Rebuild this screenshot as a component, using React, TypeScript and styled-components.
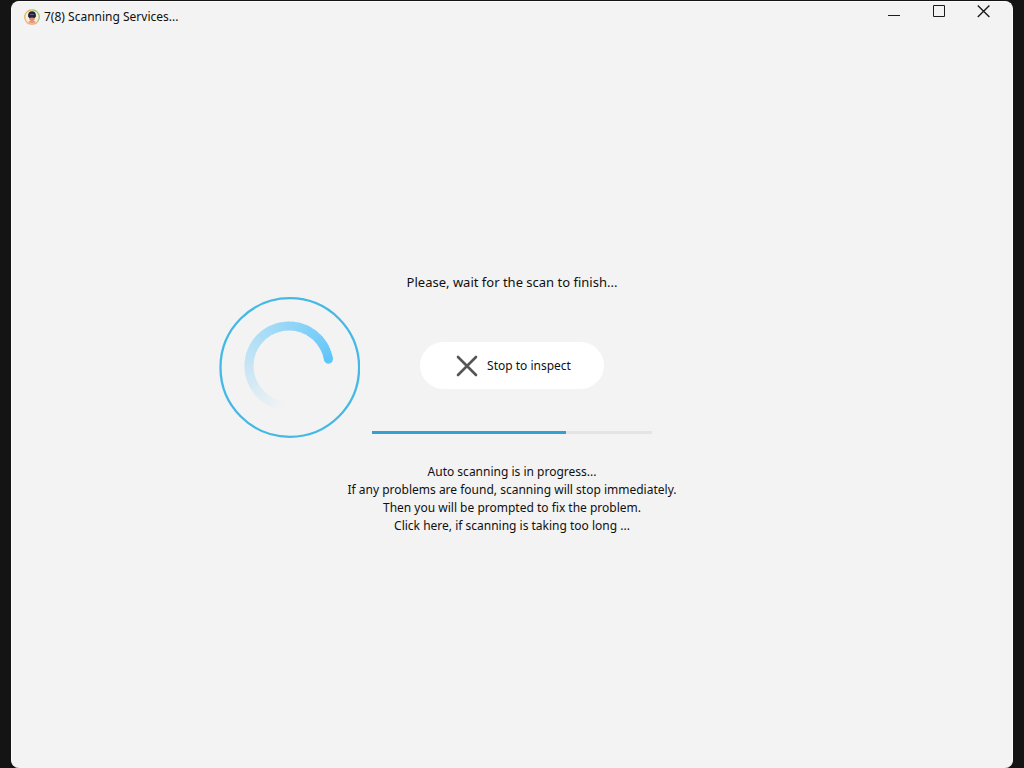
import React from "react";
import styled, { createGlobalStyle } from "styled-components";

const GlobalStyle = createGlobalStyle`
  * { box-sizing: border-box; }
  body {
    margin: 0;
    background: #141414;
    font-family: "Trebuchet MS", "Noto Sans", sans-serif;
    color: #101010;
  }
`;

const Desktop = styled.div`
  display: flex;
  min-height: 100vh;
  padding: 1px 11px 0;
`;

const Window = styled.div`
  flex: 1;
  display: flex;
  flex-direction: column;
  background: #f3f3f3;
  border: 1px solid #fbfbfb;
  border-bottom: 0;
  border-radius: 8px;
`;

const TitleBar = styled.header`
  display: flex;
  justify-content: space-between;
  align-items: flex-start;
  height: 31px;
  padding: 0 6px 0 12px;
`;

const Title = styled.h1`
  display: flex;
  align-items: center;
  gap: 4px;
  margin: 4px 0 0;
  font: 400 12px/20px "Noto Sans", sans-serif;
`;

const TitleText = styled.span`
  padding-top: 1px;
`;

const Controls = styled.div`
  display: flex;
`;

const ControlButton = styled.button`
  display: grid;
  place-items: center;
  width: 45px;
  height: 19px;
  padding: 0;
  border: 0;
  background: transparent;
  color: #1c1c1c;
`;

const Content = styled.main`
  display: grid;
  grid-template-columns: 141px 280px 141px;
  column-gap: 12px;
  justify-content: center;
  padding: 239px 0 40px;
`;

const Heading = styled.p`
  grid-column: 1 / -1;
  margin: 0 0 5px;
  font-size: 13px;
  line-height: 20px;
  text-align: center;
`;

const Actions = styled.div`
  grid-column: 2;
  display: flex;
  flex-direction: column;
  align-items: center;
  gap: 42px;
  padding-top: 45px;
`;

const StopButton = styled.button`
  display: flex;
  align-items: center;
  justify-content: center;
  gap: 9px;
  width: 184px;
  height: 47px;
  padding: 0 0 0 3px;
  border: 0;
  border-radius: 24px;
  background: #fff;
  color: #101010;
  font-family: inherit;
  font-size: 12px;
`;

const Progress = styled.progress`
  appearance: none;
  display: block;
  width: 100%;
  height: 3px;
  border: 0;
  background: #e4e4e4;

  &::-webkit-progress-bar { background: #e4e4e4; }
  &::-webkit-progress-value { background: #349fd3; }
`;

const Notes = styled.div`
  grid-column: 1 / -1;
  margin-top: 25px;
  font-size: 12px;
  line-height: 18px;
  text-align: center;
`;

const Note = styled.p`
  margin: 0;
`;

const NoteLink = styled.a`
  color: inherit;
  text-decoration: none;
`;

const STEPS = 56;
const START = -10;
const SWEEP = 252;

function point(deg: number) {
  const rad = (deg * Math.PI) / 180;
  return `${(70 + 40 * Math.cos(rad)).toFixed(2)} ${(69 + 40 * Math.sin(rad)).toFixed(2)}`;
}

function mix(t: number) {
  const head = [96, 198, 250];
  const tail = [243, 243, 243];
  return `rgb(${head.map((c, i) => Math.round(c + (tail[i] - c) * t)).join(",")})`;
}

function Spinner() {
  const segments = Array.from({ length: STEPS }, (_, i) => {
    const from = START - (i * SWEEP) / STEPS;
    const to = START - ((i + 1) * SWEEP) / STEPS;
    return { d: `M${point(from + 1)} A40 40 0 0 0 ${point(to)}`, color: mix(Math.pow(i / STEPS, 0.9)) };
  });
  return (
    <svg width="141" height="141" viewBox="0 0 141 141" fill="none" role="img" aria-label="Scanning">
      <circle cx="70.8" cy="70.5" r="69.3" stroke="#45b9e6" strokeWidth="2.3" />
      <path d={`M${point(START)} L${point(START + 0.2)}`} stroke={mix(0)} strokeWidth="9" strokeLinecap="round" />
      {segments.map((s) => (
        <path key={s.d} d={s.d} stroke={s.color} strokeWidth="9" />
      ))}
    </svg>
  );
}

function AppIcon() {
  return (
    <svg width="16" height="16" viewBox="0 0 16 16" aria-hidden="true">
      <circle cx="8" cy="8" r="7.2" fill="#f6eee0" />
      <path d="M8 .8A7.2 7.2 0 0 0 2.2 12.3" fill="none" stroke="#e2b458" strokeWidth="1.2" />
      <path d="M8 .8A7.2 7.2 0 0 1 13.8 12.3" fill="none" stroke="#9bc46b" strokeWidth="1.2" />
      <path d="M2.2 12.3A7.2 7.2 0 0 0 13.8 12.3" fill="none" stroke="#ecac85" strokeWidth="1.2" />
      <path d="M4.6 13.6q.4-2.6 3.4-2.6t3.4 2.6q-3.4 2-6.8 0Z" fill="#e89b7b" />
      <path d="M5 6h6v3q-.6 3-3 3T5 9Z" fill="#dc8a70" />
      <path d="M4 7.5Q3.8 2.3 8 2.3t4 5.2l-1.4 1.6-2.6-.6-2.6.6Z" fill="#252238" />
      <path d="M6 5.7q2-.8 4 0" fill="none" stroke="#77799a" strokeWidth=".8" />
    </svg>
  );
}

export default function App() {
  return (
    <>
      <GlobalStyle />
      <Desktop>
        <Window>
          <TitleBar>
            <Title>
              <AppIcon />
              <TitleText>7(8) Scanning Services...</TitleText>
            </Title>
            <Controls>
              <ControlButton aria-label="Minimize">
                <svg width="13" height="13" fill="none" stroke="currentColor">
                  <path d="M1 10.5h12" />
                </svg>
              </ControlButton>
              <ControlButton aria-label="Maximize">
                <svg width="13" height="13" fill="none" stroke="currentColor">
                  <path d="M1.5.5h11v11h-11Z" />
                </svg>
              </ControlButton>
              <ControlButton aria-label="Close">
                <svg width="13" height="13" fill="none" stroke="currentColor" strokeWidth="1.4">
                  <path d="M.8.5l11.6 11.6M12.4.5L.8 12.1" />
                </svg>
              </ControlButton>
            </Controls>
          </TitleBar>
          <Content>
            <Heading>Please, wait for the scan to finish...</Heading>
            <Spinner />
            <Actions>
              <StopButton>
                <svg width="22" height="22" fill="none" stroke="#555" strokeWidth="2.6" strokeLinecap="round" aria-hidden="true">
                  <path d="M2 2l18 18M20 2L2 20" />
                </svg>
                Stop to inspect
              </StopButton>
              <Progress aria-label="Scan progress" value={194} max={280} />
            </Actions>
            <Notes>
              <Note>Auto scanning is in progress...</Note>
              <Note>If any problems are found, scanning will stop immediately.</Note>
              <Note>Then you will be prompted to fix the problem.</Note>
              <Note>
                <NoteLink href="#help">Click here, if scanning is taking too long ...</NoteLink>
              </Note>
            </Notes>
          </Content>
        </Window>
      </Desktop>
    </>
  );
}
